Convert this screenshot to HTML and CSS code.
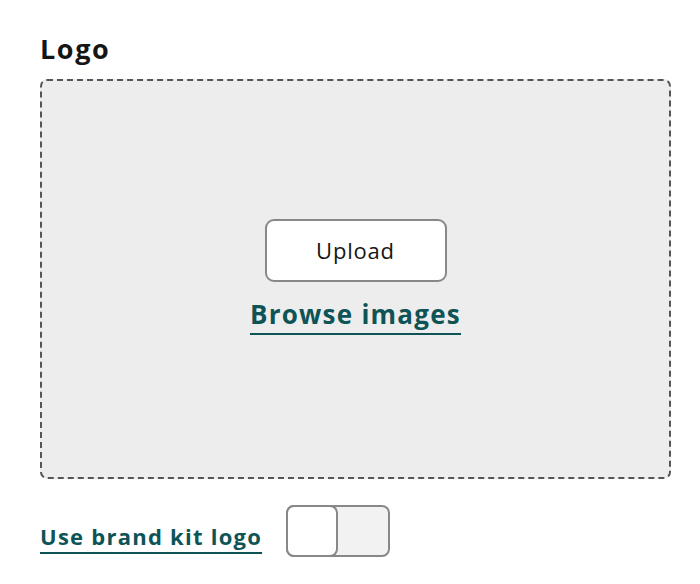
FILE: index.html
```html
<!DOCTYPE html>
<html>
<head>
<meta charset="utf-8">
<link rel="stylesheet" href="styles.css">
</head>
<body>
<div class="field">
  <h2 class="label">Logo</h2>
  <div class="dropzone">
    <button class="upload">Upload</button>
    <a class="link browse" href="#">Browse images</a>
  </div>
  <div class="brand-row">
    <a class="link brand" href="#">Use brand kit logo</a>
    <span class="toggle"><span class="knob"></span></span>
  </div>
</div>
</body>
</html>
```
FILE: styles.css
```css
html, body { margin: 0; padding: 0; background: #fff; }
body { font-family: "Open Sans", "Lato", sans-serif; color: #151515; }
.field { padding: 30px 29px 0 40px; }
.label { margin: 0 0 11px; font-size: 27px; font-weight: 700; line-height: 38px; height: 38px; letter-spacing: 1.6px; }
.dropzone {
  box-sizing: border-box;
  height: 400px;
  border: 2px dashed #555;
  border-radius: 7px;
  background: #ededed;
  display: flex;
  flex-direction: column;
  align-items: center;
  justify-content: center;
  gap: 14px;
  padding-bottom: 8px;
}
.upload {
  box-sizing: border-box;
  width: 182px;
  height: 63px;
  background: #fff;
  border: 2px solid #888;
  border-radius: 9px;
  font-family: inherit;
  font-size: 22px;
  letter-spacing: 0.8px;
  color: #151515;
}
.link {
  color: #0e5457;
  font-weight: 700;
  text-decoration: underline;
  text-decoration-thickness: 2px;
  text-decoration-skip-ink: none;
}
.browse { font-size: 26px; letter-spacing: 1.25px; text-underline-offset: 9px; }
.brand-row { display: flex; align-items: center; gap: 24px; margin-top: 26px; }
.brand { font-size: 22px; letter-spacing: 1.25px; margin-top: 10px; text-underline-offset: 7px; }
.toggle {
  box-sizing: border-box;
  width: 104px;
  height: 52px;
  border: 2px solid #888;
  border-radius: 8px;
  background: #f2f2f2;
  display: flex;
}
.knob {
  box-sizing: border-box;
  width: 52px;
  height: 52px;
  margin: -2px 0 0 -2px;
  border: 2px solid #888;
  border-radius: 8px;
  background: #fff;
}
```
